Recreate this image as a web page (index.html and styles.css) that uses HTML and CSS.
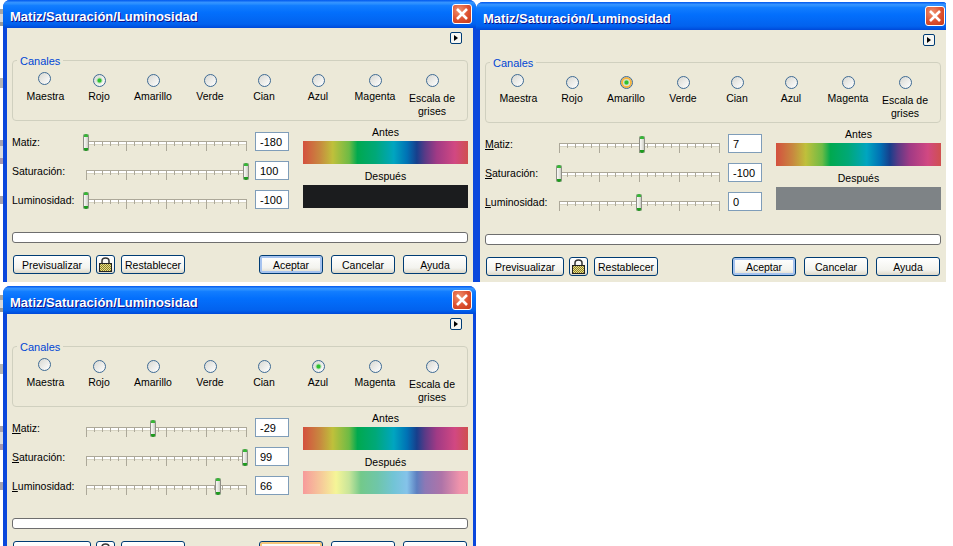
FILE: index.html
```html
<!DOCTYPE html>
<html lang="es">
<head>
  <meta charset="UTF-8" />
  <meta name="viewport" content="width=device-width, initial-scale=1.0" />
  <title>Matiz/Saturación/Luminosidad</title>
  <link rel="stylesheet" href="styles.css">
</head>
<body>
  <div class="desk-strip"></div>

  <!-- Rojo -->
  <section class="window window-red">
    <header class="titlebar">
      <h1>Matiz/Saturación/Luminosidad</h1>
      <button class="close" type="button"><svg width="14" height="14" viewBox="0 0 14 14"><path d="M2 2L12 12M12 2L2 12" stroke="#fff" stroke-width="2.6"/></svg></button>
    </header>
    <div class="client">
      <div class="tool-row"><button class="menu-btn" type="button"><svg width="4" height="6" viewBox="0 0 4 6"><path d="M0 0L4 3L0 6Z" fill="#000"/></svg></button></div>
      <div class="group">
        <div class="group-title">Canales</div>
        <div class="channels">
          <label class="channel channel-master"><input type="radio" name="c1" /><span>Maestra</span></label>
          <label class="channel"><input type="radio" name="c1" checked /><span>Rojo</span></label>
          <label class="channel"><input type="radio" name="c1" /><span>Amarillo</span></label>
          <label class="channel"><input type="radio" name="c1" /><span>Verde</span></label>
          <label class="channel"><input type="radio" name="c1" /><span>Cian</span></label>
          <label class="channel"><input type="radio" name="c1" /><span>Azul</span></label>
          <label class="channel"><input type="radio" name="c1" /><span>Magenta</span></label>
          <label class="channel channel-gray"><input type="radio" name="c1" /><span>Escala de grises</span></label>
        </div>
      </div>
      <div class="main">
        <div class="sliders">
          <div class="row"><span class="row-label">Matiz:</span><div class="slider"><div class="track"></div><div class="thumb" style="left: 0px"></div></div><input class="num" type="text" value="-180" /></div>
          <div class="row"><span class="row-label">Saturación:</span><div class="slider"><div class="track"></div><div class="thumb" style="left: 160px"></div></div><input class="num" type="text" value="100" /></div>
          <div class="row"><span class="row-label">Luminosidad:</span><div class="slider"><div class="track"></div><div class="thumb" style="left: 0px"></div></div><input class="num" type="text" value="-100" /></div>
        </div>
        <div class="preview">
          <div class="caption">Antes</div>
          <div class="swatch spectrum"></div>
          <div class="caption caption-after">Después</div>
          <div class="swatch after-black"></div>
        </div>
      </div>
      <div class="bar"></div>
      <div class="buttons">
        <button class="btn btn-preview" type="button">Previsualizar</button>
        <button class="btn btn-lock" type="button"><svg width="13" height="15" viewBox="0 0 13 15"><path d="M3 7V4Q3 1 6.500 1Q10 1 10 4V7" fill="none" stroke="#333" stroke-width="1.500"/><rect x="0.500" y="6.500" width="12" height="8" fill="url(#check1)" stroke="#222"/><defs><pattern id="check1" width="2" height="2" patternUnits="userSpaceOnUse"><rect width="2" height="2" fill="#e8dc8c"/><rect width="1" height="1" fill="#8c8226"/><rect x="1" y="1" width="1" height="1" fill="#8c8226"/></pattern></defs></svg></button>
        <button class="btn btn-reset" type="button">Restablecer</button>
        <button class="btn btn-default" type="button">Aceptar</button>
        <button class="btn btn-wide" type="button">Cancelar</button>
        <button class="btn btn-wide" type="button">Ayuda</button>
      </div>
    </div>
  </section>

  <!-- Amarillo -->
  <section class="window window-yellow">
    <header class="titlebar">
      <h1>Matiz/Saturación/Luminosidad</h1>
      <button class="close" type="button"><svg width="14" height="14" viewBox="0 0 14 14"><path d="M2 2L12 12M12 2L2 12" stroke="#fff" stroke-width="2.6"/></svg></button>
    </header>
    <div class="client">
      <div class="tool-row"><button class="menu-btn" type="button"><svg width="4" height="6" viewBox="0 0 4 6"><path d="M0 0L4 3L0 6Z" fill="#000"/></svg></button></div>
      <div class="group">
        <div class="group-title">Canales</div>
        <div class="channels">
          <label class="channel channel-master"><input type="radio" name="c2" /><span>Maestra</span></label>
          <label class="channel"><input type="radio" name="c2" /><span>Rojo</span></label>
          <label class="channel"><input class="hot" type="radio" name="c2" checked /><span>Amarillo</span></label>
          <label class="channel"><input type="radio" name="c2" /><span>Verde</span></label>
          <label class="channel"><input type="radio" name="c2" /><span>Cian</span></label>
          <label class="channel"><input type="radio" name="c2" /><span>Azul</span></label>
          <label class="channel"><input type="radio" name="c2" /><span>Magenta</span></label>
          <label class="channel channel-gray"><input type="radio" name="c2" /><span>Escala de grises</span></label>
        </div>
      </div>
      <div class="main">
        <div class="sliders">
          <div class="row"><span class="row-label"><u>M</u>atiz:</span><div class="slider"><div class="track"></div><div class="thumb" style="left: 83px"></div></div><input class="num" type="text" value="7" /></div>
          <div class="row"><span class="row-label"><u>S</u>aturación:</span><div class="slider"><div class="track"></div><div class="thumb" style="left: 0px"></div></div><input class="num" type="text" value="-100" /></div>
          <div class="row"><span class="row-label"><u>L</u>uminosidad:</span><div class="slider"><div class="track"></div><div class="thumb" style="left: 80px"></div></div><input class="num" type="text" value="0" /></div>
        </div>
        <div class="preview">
          <div class="caption">Antes</div>
          <div class="swatch spectrum"></div>
          <div class="caption caption-after">Después</div>
          <div class="swatch after-gray"></div>
        </div>
      </div>
      <div class="bar"></div>
      <div class="buttons">
        <button class="btn btn-preview" type="button">Previsualizar</button>
        <button class="btn btn-lock" type="button"><svg width="13" height="15" viewBox="0 0 13 15"><path d="M3 7V4Q3 1 6.500 1Q10 1 10 4V7" fill="none" stroke="#333" stroke-width="1.500"/><rect x="0.500" y="6.500" width="12" height="8" fill="url(#check2)" stroke="#222"/><defs><pattern id="check2" width="2" height="2" patternUnits="userSpaceOnUse"><rect width="2" height="2" fill="#e8dc8c"/><rect width="1" height="1" fill="#8c8226"/><rect x="1" y="1" width="1" height="1" fill="#8c8226"/></pattern></defs></svg></button>
        <button class="btn btn-reset" type="button">Restablecer</button>
        <button class="btn btn-default" type="button">Aceptar</button>
        <button class="btn btn-wide" type="button">Cancelar</button>
        <button class="btn btn-wide" type="button">Ayuda</button>
      </div>
    </div>
  </section>

  <!-- Azul -->
  <section class="window window-blue">
    <header class="titlebar">
      <h1>Matiz/Saturación/Luminosidad</h1>
      <button class="close" type="button"><svg width="14" height="14" viewBox="0 0 14 14"><path d="M2 2L12 12M12 2L2 12" stroke="#fff" stroke-width="2.6"/></svg></button>
    </header>
    <div class="client">
      <div class="tool-row"><button class="menu-btn" type="button"><svg width="4" height="6" viewBox="0 0 4 6"><path d="M0 0L4 3L0 6Z" fill="#000"/></svg></button></div>
      <div class="group">
        <div class="group-title">Canales</div>
        <div class="channels">
          <label class="channel channel-master"><input type="radio" name="c3" /><span>Maestra</span></label>
          <label class="channel"><input type="radio" name="c3" /><span>Rojo</span></label>
          <label class="channel"><input type="radio" name="c3" /><span>Amarillo</span></label>
          <label class="channel"><input type="radio" name="c3" /><span>Verde</span></label>
          <label class="channel"><input type="radio" name="c3" /><span>Cian</span></label>
          <label class="channel"><input type="radio" name="c3" checked /><span>Azul</span></label>
          <label class="channel"><input type="radio" name="c3" /><span>Magenta</span></label>
          <label class="channel channel-gray"><input type="radio" name="c3" /><span>Escala de grises</span></label>
        </div>
      </div>
      <div class="main">
        <div class="sliders">
          <div class="row"><span class="row-label"><u>M</u>atiz:</span><div class="slider"><div class="track"></div><div class="thumb" style="left: 67px"></div></div><input class="num" type="text" value="-29" /></div>
          <div class="row"><span class="row-label"><u>S</u>aturación:</span><div class="slider"><div class="track"></div><div class="thumb" style="left: 159px"></div></div><input class="num" type="text" value="99" /></div>
          <div class="row"><span class="row-label"><u>L</u>uminosidad:</span><div class="slider"><div class="track"></div><div class="thumb" style="left: 132px"></div></div><input class="num" type="text" value="66" /></div>
        </div>
        <div class="preview">
          <div class="caption">Antes</div>
          <div class="swatch spectrum"></div>
          <div class="caption caption-after">Después</div>
          <div class="swatch after-pastel"></div>
        </div>
      </div>
      <div class="bar"></div>
      <div class="buttons">
        <button class="btn btn-preview" type="button">Previsualizar</button>
        <button class="btn btn-lock" type="button"><svg width="13" height="15" viewBox="0 0 13 15"><path d="M3 7V4Q3 1 6.500 1Q10 1 10 4V7" fill="none" stroke="#333" stroke-width="1.500"/><rect x="0.500" y="6.500" width="12" height="8" fill="#e8dc8c" stroke="#222"/></svg></button>
        <button class="btn btn-reset" type="button">Restablecer</button>
        <button class="btn btn-default btn-hot" type="button">Aceptar</button>
        <button class="btn btn-wide" type="button">Cancelar</button>
        <button class="btn btn-wide" type="button">Ayuda</button>
      </div>
    </div>
  </section>
</body>
</html>
```

FILE: styles.css
```css
html, body {
  margin: 0;
  height: 546px;
  overflow: hidden;
  background-color: #fff;
}
body {
  position: relative;
  font-family: "Liberation Sans", Arial, sans-serif;
  font-size: 10.5px;
  color: #000;
}
button, input {
  font: inherit;
  color: inherit;
  margin: 0;
}

/* bits of the desktop left of the windows */
.desk-strip {
  position: absolute;
  left: 0;
  top: 0;
  width: 3px;
  height: 546px;
  background: linear-gradient(#fff 0 9px, #a5a5a5 9px 14px, #d8d8d8 14px 22px, #999 22px 26px, #fff 26px 78px,
    #b5b5b5 78px 88px, #fff 88px 140px, #a5a2b0 140px 146px, #ddd 146px 158px, #a597b0 158px 164px, #fff 164px 196px,
    #a5a2b0 196px 204px, #fff 204px 295px, #a5a5a5 295px 300px, #d8d8d8 300px 308px, #999 308px 312px, #fff 312px 364px,
    #b5b5b5 364px 374px, #fff 374px 426px, #a5a2b0 426px 432px, #ddd 432px 444px, #a597b0 444px 450px, #fff 450px 482px,
    #a5a2b0 482px 490px, #fff 490px);
}

/* windows sit on a free canvas */
.window {
  position: absolute;
  width: 473px;
  height: 282px;
  border-radius: 7px 7px 0 0;
  overflow: hidden;
  background-color: #0a47dc;
}
.window-red {
  left: 3px;
  top: 0;
}
.window-yellow {
  left: 476px;
  top: 2px;
  clip-path: inset(0 3px 2px 0);
}
.window-blue {
  left: 3px;
  top: 286px;
}

.titlebar {
  display: flex;
  align-items: center;
  justify-content: space-between;
  height: 28px;
  padding: 0 4px 0 7px;
  box-sizing: border-box;
  background: linear-gradient(#0058ee 0, #3593ff 9%, #288eff 14%, #127dff 20%, #036ffc 45%, #0262ee 86%, #0057e5 93%, #0048d8 100%);
}
.titlebar h1 {
  margin: 0;
  padding-top: 5px;
  font-family: "Liberation Sans", Arial, sans-serif;
  font-size: 13px;
  font-weight: bold;
  color: #fff;
  text-shadow: 1px 1px 0 #0f1089;
}
.close {
  display: flex;
  align-items: center;
  justify-content: center;
  width: 20px;
  height: 20px;
  padding: 0;
  border: 1px solid #fff;
  border-radius: 3px;
  background: radial-gradient(circle at 35% 30%, #f0926e, #dc5030 55%, #c53a18);
}

.client {
  height: 252px;
  padding: 4px 5px 0;
  border-left: 4px solid #0a47dc;
  border-right: 3px solid #0a47dc;
  background-color: #ece9d8;
}

.tool-row {
  display: flex;
  justify-content: flex-end;
  padding-right: 6px;
}
.menu-btn {
  display: flex;
  align-items: center;
  justify-content: center;
  width: 12px;
  height: 12px;
  padding: 0;
  border: 1px solid #003c74;
  border-radius: 2px;
  background-color: #f6f6f2;
}

.group {
  box-sizing: border-box;
  height: 61px;
  margin-top: 16px;
  padding: 0 3px;
  border: 1px solid #d0d0bf;
  border-radius: 4px;
}
.group-title {
  width: fit-content;
  margin: -6px 0 0 1px;
  padding: 0 3px;
  font-size: 11px;
  line-height: 13px;
  color: #0046d5;
  background-color: #ece9d8;
}
.channels {
  display: grid;
  grid-template-columns: 56px 54px 54px 60px 48px 60px 54px 60px;
}
.channel {
  display: flex;
  flex-direction: column;
  align-items: center;
  text-align: center;
  line-height: 13px;
}
.channel input {
  appearance: none;
  width: 13px;
  height: 13px;
  margin: 6px 0 3px;
  border: 1px solid #3f6b94;
  border-radius: 50%;
  background: linear-gradient(135deg, #d8d8d2, #fff);
}
.channel input:checked {
  background: radial-gradient(circle, #2fbf2f 0 1.5px, #b5e2b5 2.5px, transparent 3.5px), linear-gradient(135deg, #d8d8d2, #fff);
}
.channel input.hot {
  box-shadow: inset 0 0 0 2px #f6b53f;
}
.channel-master input {
  margin: 4px 0 5px;
}
.channel-master span {
  margin-left: 3px;
}
.channel-gray input {
  margin-bottom: 5px;
}

.main {
  display: flex;
  justify-content: space-between;
  margin-top: 4px;
}
.sliders {
  padding-top: 7px;
}
.row {
  display: flex;
  align-items: center;
  height: 19px;
  margin-bottom: 10px;
}
.row:last-child {
  margin-bottom: 0;
}
.row-label {
  width: 74px;
}
.slider {
  position: relative;
  width: 161px;
  height: 19px;
}
.track {
  height: 10px;
  margin-top: 9px;
  background:
    repeating-linear-gradient(90deg, #aca899 0 1px, transparent 1px 40px) 0 0 / 100% 10px no-repeat,
    repeating-linear-gradient(90deg, #aca899 0 1px, transparent 1px 8px) 0 0 / 100% 5px no-repeat,
    linear-gradient(#aca899 0 1px, #fff 1px 3px, #d8d5c4 3px 4px, transparent 4px);
}
.thumb {
  position: absolute;
  top: 2px;
  box-sizing: border-box;
  width: 6px;
  height: 17px;
  margin-left: -3px;
  border-radius: 2px;
  box-shadow: inset 1px 0 #8f8f86, inset -1px 0 #8f8f86;
  background:
    linear-gradient(#35b835 0 3px, transparent 3px 14px, #1c9c1c 14px),
    linear-gradient(90deg, #fff, #e8e8e2 50%, #bdbdb4);
}
.num {
  box-sizing: border-box;
  width: 34px;
  height: 19px;
  margin-left: 8px;
  padding: 0 4px;
  border: 1px solid #7f9db9;
  font-size: 11px;
  background-color: #fff;
}

.preview {
  width: 165px;
}
.caption {
  margin-bottom: 2px;
  line-height: 14px;
  text-align: center;
}
.caption-after {
  margin-top: 5px;
}
.swatch {
  height: 23px;
}
.spectrum {
  background: linear-gradient(90deg, #d4503f 0, #c8873f 10%, #bfc03b 18%, #6dbb45 28%, #00a94f 33%, #00a878 44%, #00a5c0 55%, #0072b5 63%, #173f8c 69%, #5b3a86 74%, #a03a85 81%, #d14882 92%, #d0504f 100%);
}
.after-black {
  background-color: #1b1c1e;
}
.after-gray {
  background-color: #7e8386;
}
.after-pastel {
  background: linear-gradient(90deg, #f79a9b 0, #f6c59a 10%, #f5f597 20%, #c8e59a 28%, #73c98a 35%, #6fc6a8 45%, #72c4d6 55%, #85c3ea 63%, #5d7fc0 69%, #8d78b5 74%, #ae74a8 84%, #ef93ab 95%, #f29aa6 100%);
}

.bar {
  box-sizing: border-box;
  height: 11px;
  margin-top: 23px;
  border: 1px solid #6e6e6e;
  border-radius: 3px;
  background-color: #fff;
}

.buttons {
  display: flex;
  margin-top: 12px;
  padding: 0 1px;
}
.btn {
  box-sizing: border-box;
  height: 19px;
  padding: 0;
  border: 1px solid #003c74;
  border-radius: 3px;
  background: linear-gradient(#fff, #f3f3ee 70%, #dcd8c9);
}
.btn-preview {
  width: 78px;
}
.btn-lock {
  display: flex;
  align-items: center;
  justify-content: center;
  width: 19px;
  margin-left: 5px;
}
.btn-reset {
  width: 64px;
  margin-left: 6px;
}
.btn-default {
  width: 64px;
  margin-left: auto;
  box-shadow: inset 0 0 0 2px #a6c3ef;
}
.btn-hot {
  box-shadow: inset 0 0 0 2px #f5c67a;
}
.btn-wide {
  width: 64px;
  margin-left: 8px;
}
```
